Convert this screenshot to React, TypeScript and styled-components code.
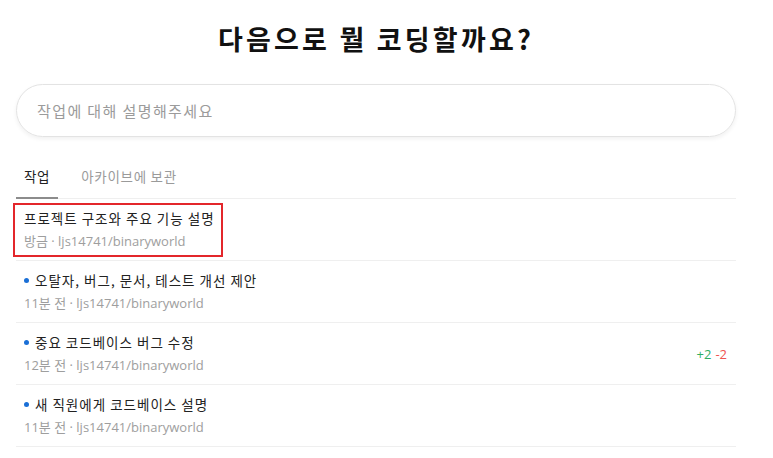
import React from "react";
import styled, { createGlobalStyle } from "styled-components";

const Global = createGlobalStyle`
  html, body { margin: 0; padding: 0; background: #fff; }
  body { font-family: "Noto Sans CJK KR", "Open Sans", sans-serif; color: #1f1f1f; }
  * { box-sizing: border-box; }
`;

const Page = styled.div`
  width: 720px;
  margin-left: 16px;
  padding-top: 18px;
`;

const Title = styled.h1`
  margin: 0;
  text-align: center;
  font-size: 27px;
  line-height: 42px;
  font-weight: 700;
  color: #111;
  letter-spacing: 3.2px;
`;

const InputBox = styled.div`
  margin-top: 24px;
  height: 53px;
  border: 1px solid #e3e3e3;
  border-radius: 27px;
  box-shadow: 0 2px 4px rgba(0, 0, 0, 0.06);
  display: flex;
  align-items: center;
  padding-left: 20px;
  font-size: 15px;
  letter-spacing: 1.4px;
  color: #9b9b9b;
`;

const Tabs = styled.div`
  margin-top: 17px;
  display: flex;
  gap: 15px;
  border-bottom: 1px solid #efefef;
`;

const Tab = styled.div<{ $active?: boolean }>`
  padding: 12px 8px 11px;
  line-height: 20px;
  font-size: 13.5px;
  letter-spacing: 0.7px;
  color: ${(p) => (p.$active ? "#222" : "#9a9a9a")};
  border-bottom: 2px solid ${(p) => (p.$active ? "#8c8c8c" : "transparent")};
  margin-bottom: -1px;
`;

const Row = styled.div`
  display: flex;
  align-items: center;
  justify-content: space-between;
  padding: 9px 9px 9px 8px;
  border-bottom: 1px solid #efefef;
`;

const Content = styled.div<{ $marked?: boolean }>`
  position: relative;
  display: flex;
  flex-direction: column;
  gap: 3px;
  ${(p) =>
    p.$marked &&
    `
    &::after {
      content: "";
      position: absolute;
      inset: -5px -8px -6px -11px;
      border: 2px solid #e3262b;
      pointer-events: none;
    }
  `}
`;

const RowTitle = styled.div`
  display: flex;
  align-items: center;
  gap: 6px;
  font-size: 13.5px;
  line-height: 20px;
  letter-spacing: 1px;
  color: #222;
`;

const Dot = styled.span`
  width: 5px;
  height: 5px;
  border-radius: 50%;
  background: #1a6fd6;
  flex: none;
`;

const Meta = styled.div`
  font-size: 13px;
  line-height: 20px;
  color: #9e9e9e;
  font-family: "Open Sans", "Noto Sans CJK KR", sans-serif;
`;

const Diff = styled.div`
  display: flex;
  gap: 4px;
  font-size: 13px;
  font-family: "Open Sans", sans-serif;
`;

const Add = styled.span`
  color: #2fae63;
`;
const Del = styled.span`
  color: #ef5350;
`;

type Task = { title: string; meta: string; unread?: boolean; marked?: boolean; diff?: [string, string] };

const tasks: Task[] = [
  { title: "프로젝트 구조와 주요 기능 설명", meta: "방금 · ljs14741/binaryworld", marked: true },
  { title: "오탈자, 버그, 문서, 테스트 개선 제안", meta: "11분 전 · ljs14741/binaryworld", unread: true },
  { title: "중요 코드베이스 버그 수정", meta: "12분 전 · ljs14741/binaryworld", unread: true, diff: ["+2", "-2"] },
  { title: "새 직원에게 코드베이스 설명", meta: "11분 전 · ljs14741/binaryworld", unread: true },
];

export default function App() {
  return (
    <Page>
      <Global />
      <Title>다음으로 뭘 코딩할까요?</Title>
      <InputBox>작업에 대해 설명해주세요</InputBox>
      <Tabs>
        <Tab $active>작업</Tab>
        <Tab>아카이브에 보관</Tab>
      </Tabs>
      {tasks.map((t) => (
        <Row key={t.title}>
          <Content $marked={t.marked}>
            <RowTitle>
              {t.unread && <Dot />}
              {t.title}
            </RowTitle>
            <Meta>{t.meta}</Meta>
          </Content>
          {t.diff && (
            <Diff>
              <Add>{t.diff[0]}</Add>
              <Del>{t.diff[1]}</Del>
            </Diff>
          )}
        </Row>
      ))}
    </Page>
  );
}
